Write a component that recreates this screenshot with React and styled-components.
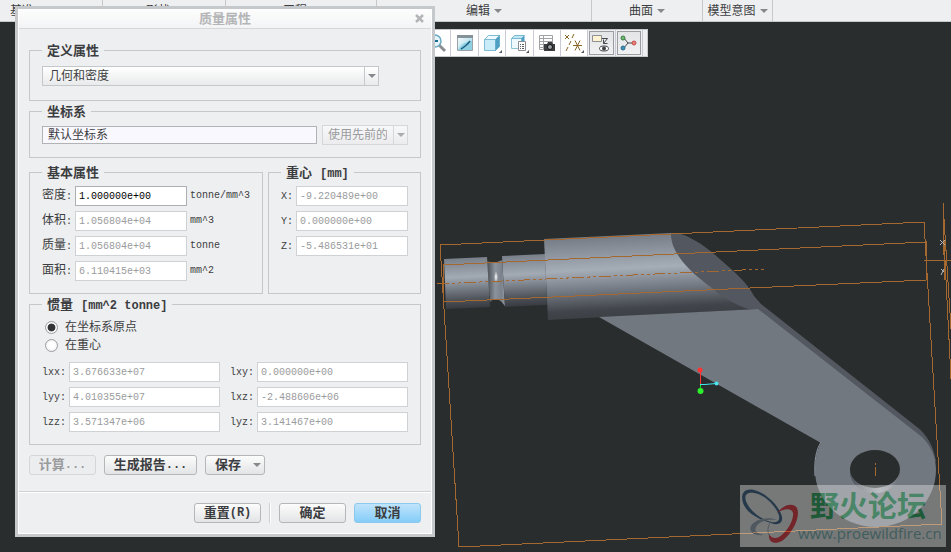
import React, { useState } from "react";
import styled, { createGlobalStyle, ThemeProvider } from "styled-components";

const theme = {
  fonts: {
    ui: '"Liberation Sans", "Noto Sans CJK SC", sans-serif',
    mono: '"Liberation Mono", "Noto Sans CJK SC", monospace',
  },
  colors: {
    panel: "#eeeff1",
    frame: "#c6c9cc",
    border: "#c5c8cb",
    text: "#3c3d40",
    muted: "#9a9b9d",
    canvas: "#292d2e",
    datum: "#a5692f",
  },
};

const GlobalStyle = createGlobalStyle`
  * {
    box-sizing: border-box;
  }
  body {
    margin: 0;
    background: #292d2e;
  }
`;

const Page = styled.div`
  position: relative;
  display: flex;
  flex-direction: column;
  min-height: 100vh;
  overflow: hidden;
  font: 12px/18px ${p => p.theme.fonts.ui};
  color: ${p => p.theme.colors.text};
`;

const Ribbon = styled.nav`
  display: flex;
  height: 22px;
  background: ${p => p.theme.colors.panel};
  border-bottom: 1px solid ${p => p.theme.colors.frame};
`;

const RibbonGroup = styled.button`
  display: flex;
  flex: 0 0 ${p => p.$width}px;
  align-items: center;
  justify-content: ${p => (p.$start ? "flex-start" : "center")};
  gap: 4px;
  padding: 0 0 0 ${p => (p.$start ? "10px" : "0")};
  border: 0;
  border-right: 1px solid ${p => p.theme.colors.frame};
  background: none;
  color: inherit;
  font: inherit;
  white-space: nowrap;
`;

const Caret = styled.span`
  flex: none;
  border: solid transparent;
  border-width: 4px 4px 0;
  border-top-color: ${p => (p.$muted ? "#a9abad" : "#86888b")};
`;

const Viewport = styled.main`
  position: relative;
  flex: 1;
  background: ${p => p.theme.colors.canvas};
`;

const Scene = styled.svg`
  position: absolute;
  inset: 0;
  width: 100%;
  height: 100%;
`;

const Toolbar = styled.div`
  position: relative;
  display: flex;
  width: 225px;
  height: 28px;
  margin: 7px 0 0 423px;
  padding-right: 4px;
  border: 1px solid ${p => p.theme.colors.frame};
  background: ${p => p.theme.colors.panel};
`;

const ToolButton = styled.button`
  display: flex;
  flex: 1;
  align-items: center;
  justify-content: center;
  padding: 0;
  border: 0;
  border-right: 1px solid #c9cad3;
  background: ${p => (p.$active ? "linear-gradient(#e3e4e6, #f1f2f3)" : "#fff")};
  box-shadow: ${p =>
    p.$active ? "inset 0 0 0 1px #eeeff1, inset 0 0 0 2px #9b9da0" : "none"};
`;

const Dialog = styled.section`
  position: absolute;
  top: 6px;
  left: 15px;
  width: 420px;
  border: 3px solid ${p => p.theme.colors.frame};
  background: ${p => p.theme.colors.panel};
  box-shadow: inset 0 0 0 1px #fff;
`;

const TitleBar = styled.header`
  display: grid;
  grid-template-columns: 24px 1fr 24px;
  align-items: center;
  height: 20px;
  margin: 0 1px;
  border-bottom: 1px solid #d5d7d9;
  background: linear-gradient(#fdfdfd, #f3f4f5);
`;

const DialogTitle = styled.h1`
  grid-column: 2;
  margin: 0;
  color: #b4b5b7;
  font-size: 13px;
  font-weight: bold;
  line-height: 18px;
  text-align: center;
`;

const CloseButton = styled.button`
  display: flex;
  justify-content: center;
  padding: 0;
  border: 0;
  background: none;
`;

const DialogBody = styled.div`
  display: flex;
  flex-direction: column;
  gap: 2px;
  padding: 13px 11px 16px;
`;

const Group = styled.fieldset`
  flex: ${p => (p.$grow ? "1" : "none")};
  min-width: 0;
  margin: 0;
  padding: ${p => (p.$roomy ? "7px 12px 15px" : "5px 12px 12px")};
  border: 1px solid ${p => p.theme.colors.border};
`;

const GroupTitle = styled.legend`
  height: 17px;
  padding: 0 5px;
  font-size: 13px;
  font-weight: bold;
  line-height: 17px;
`;

const Unit = styled.span`
  padding-left: ${p => (p.$spaced ? "8px" : "0")};
  font: bold 12px/12px ${p => p.theme.fonts.mono};
`;

const Columns = styled.div`
  display: flex;
  gap: 5px;
  margin-top: 4px;
`;

const Row = styled.div`
  display: flex;
  align-items: center;
  gap: 5px;
`;

const SelectBox = styled.div`
  display: grid;
  flex: none;
  width: ${p => p.$width}px;
  height: ${p => p.$height}px;
`;

const Select = styled.select`
  grid-area: 1 / 1;
  width: 100%;
  padding: 0 20px 0 6px;
  appearance: none;
  border: 1px solid ${p => p.theme.colors.border};
  border-radius: 0;
  background: linear-gradient(#fff, #e9eaeb);
  color: inherit;
  font: inherit;
  opacity: 1;
  &:disabled {
    padding-left: 5px;
    border-color: #d5d8da;
    background: linear-gradient(#f7f8f9, #ececee);
    color: ${p => p.theme.colors.muted};
  }
`;

const SelectArrow = styled.span`
  grid-area: 1 / 1;
  display: flex;
  align-items: center;
  justify-content: center;
  justify-self: end;
  width: 15px;
  border: 1px solid ${p => (p.$muted ? "#d5d8da" : p.theme.colors.border)};
  pointer-events: none;
`;

const TextBox = styled.input`
  flex: 1;
  min-width: 0;
  height: 18px;
  padding: 0 5px;
  border: 1px solid #b1b3b5;
  border-radius: 0;
  background: #f9f8ff;
  color: inherit;
  font: inherit;
`;

const FieldList = styled.div`
  display: grid;
  grid-template-columns: ${p => p.$columns};
  column-gap: ${p => p.$gap || 0}px;
  row-gap: 5px;
`;

const FieldRow = styled.div`
  display: flex;
  align-items: center;
  font-size: 12px;
`;

const FieldLabel = styled.label`
  flex: 0 0 ${p => p.$width}px;
  white-space: nowrap;
`;

const Latin = styled.span`
  font: 10px/18px ${p => p.theme.fonts.mono};
`;

const NumberBox = styled.input`
  flex: ${p => (p.$width ? `0 0 ${p.$width}px` : "1")};
  min-width: 0;
  height: 20px;
  padding: 0 3px;
  border: 1px solid ${p => (p.readOnly ? "#cfd2d5" : "#adafb1")};
  border-radius: 0;
  background: #fff;
  color: ${p => (p.readOnly ? p.theme.colors.muted : "#000")};
  font: 10px/18px ${p => p.theme.fonts.mono};
`;

const FieldUnit = styled(Latin)`
  padding-left: 3px;
  white-space: nowrap;
`;

const RadioLabel = styled.label`
  display: flex;
  align-items: center;
  gap: 7px;
  height: 18px;
  padding-left: 3px;
`;

const Radio = styled.input`
  width: 13px;
  height: 13px;
  margin: 0;
  appearance: none;
  border: 1px solid #9c9ea1;
  border-radius: 50%;
  background: radial-gradient(#fff 40%, #e3e4e6);
  &:checked {
    background: radial-gradient(#333437 45%, #f6f6f7 55%);
  }
`;

const Inertia = styled.div`
  margin-top: 8px;
`;

const Actions = styled.div`
  display: flex;
  gap: 8px;
  margin-top: 8px;
`;

const Footer = styled.footer`
  display: flex;
  justify-content: flex-end;
  gap: 8px;
  margin: 0 1px;
  padding: 11px 10px;
  border-top: 1px solid #d0d2d4;
  box-shadow: inset 0 1px 0 #fff;
`;

const Divider = styled.span`
  width: 2px;
  border-left: 1px solid #cdcfd1;
  background: #fff;
`;

const Button = styled.button`
  display: flex;
  align-items: center;
  justify-content: ${p => (p.$menu ? "space-between" : "center")};
  width: ${p => p.$width || 67}px;
  height: 20px;
  padding: ${p => (p.$menu ? "0 3px 0 9px" : "0")};
  border: 1px solid ${p => (p.$primary ? "#8cc9ee" : "#b4b6b8")};
  border-radius: 3px;
  background: ${p =>
    p.$primary
      ? "linear-gradient(#c0e4fb, #84cdf9)"
      : "linear-gradient(#fcfcfc, #e3e4e5)"};
  color: inherit;
  font: bold 13px/18px ${p => p.theme.fonts.ui};
  white-space: nowrap;
  &:disabled {
    border-color: #d4d6d8;
    background: #ecedef;
    color: ${p => p.theme.colors.muted};
  }
`;

const Watermark = styled.div`
  position: absolute;
  right: 5px;
  bottom: 5px;
  display: flex;
  width: 206px;
  height: 62px;
  background: #e2e2e2;
  opacity: 0.42;
`;

const WatermarkText = styled.div`
  display: flex;
  flex-direction: column;
  color: #5f9f9a;
  font: 15px/20px "Open Sans", sans-serif;
`;

const WatermarkName = styled.strong`
  padding-left: 12px;
  color: #119846;
  font: bold 29px/38px "Noto Sans CJK SC", sans-serif;
`;

const ribbonGroups = [
  { label: "基准", width: 103, start: true },
  { label: "形状", width: 123 },
  { label: "工程", width: 151 },
  { label: "编辑", width: 215 },
  { label: "曲面", width: 111 },
  { label: "模型意图", width: 70 },
];

const basics = [
  { id: "density", label: "密度", value: "1.000000e+00", unit: "tonne/mm^3", editable: true },
  { id: "volume", label: "体积", value: "1.056804e+04", unit: "mm^3" },
  { id: "mass", label: "质量", value: "1.056804e+04", unit: "tonne" },
  { id: "area", label: "面积", value: "6.110415e+03", unit: "mm^2" },
];

const centroid = [
  { id: "X", value: "-9.220489e+00" },
  { id: "Y", value: "0.000000e+00" },
  { id: "Z", value: "-5.486531e+01" },
];

const inertia = [
  { id: "lxx", value: "3.676633e+07" },
  { id: "lxy", value: "0.000000e+00" },
  { id: "lyy", value: "4.010355e+07" },
  { id: "lxz", value: "-2.488606e+06" },
  { id: "lzz", value: "3.571347e+06" },
  { id: "lyz", value: "3.141467e+00" },
];

const Corner = () => <path d="M20 17v3h-3z" fill="#55585b" />;

const toolIcons = {
  zoomOut: (
    <>
      <path d="M12 12l6 6" stroke="#8b8f94" strokeWidth="3" />
      <circle cx="8" cy="8" r="6" fill="#e4f5fb" stroke="#6aa9bf" strokeWidth="1.5" />
      <path d="M5 8h6" stroke="#1b6d92" strokeWidth="2" />
    </>
  ),
  repaint: (
    <>
      <path d="M2.500 2.500h15v15h-15z" fill="url(#sheet)" stroke="#9aa3a9" />
      <path d="M2 2h16v3H2z" fill="#85929a" />
      <path d="M3 17c3-6 7-8 14-9v9z" fill="#8fd0e2" />
      <path d="M6 16c2-1 7-5 9-8" stroke="#1c5f80" strokeWidth="1.500" fill="none" />
    </>
  ),
  shading: (
    <>
      <path d="M2.500 6.500h11v11h-11z" fill="#c9ecf8" stroke="#7dbad3" />
      <path d="M2.500 6.500l4-4h11l-4 4z" fill="#eefafd" stroke="#7dbad3" />
      <path d="M13.500 6.500l4-4v11l-4 4z" fill="#4d9fc3" stroke="#68aecb" />
      <Corner />
    </>
  ),
  views: (
    <>
      <path d="M2.500 5.500h10v10h-10z" fill="#eef9fd" stroke="#8dc3d9" />
      <path d="M2.500 5.500l3-3h10l-3 3z" fill="#bfe7f6" stroke="#7ab8d2" />
      <path d="M12.500 5.500l3-3v7h-3z" fill="#4d9fc3" />
      <path d="M9.500 8.500h7v9h-7z" fill="#fff" stroke="#8a8c8f" />
      <path d="M11 11.500h1m1 0h2m-4 2h1m1 0h2m-4 2h1m1 0h2" stroke="#5b5e61" />
      <Corner />
    </>
  ),
  snapshot: (
    <>
      <path d="M2.500 2.500h13v14h-13zM2.500 5.500h13m-13 3h13m-13 3h13m-13 3h13m-9-12v14" fill="#fff" stroke="#a0a3a6" />
      <path d="M7 11h3l1-2h4l1 2h2v7H7z" fill="#3a3d40" />
      <circle cx="13" cy="14" r="2.500" fill="#9da1a5" stroke="#111" />
    </>
  ),
  datums: (
    <>
      <path d="M1 2l4 4m0-4L1 6M10 1l-2 4M7 8l-2 4M4 14l-2 4M9 12.500h9m-7-5l5 10m0-10l-5 10" stroke="#8a6628" fill="none" />
      <Corner />
    </>
  ),
  annotations: (
    <>
      <path d="M1.500 2.500h9v6h-9z" fill="#fff3d4" stroke="#8d8f92" />
      <path d="M11 5.500h5.500l-4 5m0-4v4h4" stroke="#46494c" fill="none" />
      <ellipse cx="13" cy="15.500" rx="4.500" ry="2.500" fill="#fff" stroke="#3f4144" />
      <circle cx="13" cy="15.500" r="2" fill="#3f4144" />
    </>
  ),
  spin: (
    <>
      <path d="M4 4l5 6h7M9 10l-5 6" stroke="#44474a" fill="none" />
      <circle cx="4" cy="5" r="2" fill="#6fbb6f" stroke="#3c7c42" />
      <circle cx="15" cy="10" r="2" fill="#e87f7a" stroke="#c5504b" />
      <circle cx="4" cy="15" r="2" fill="#3f8fb4" stroke="#2b6d8f" />
    </>
  ),
};

const tools = [
  { id: "zoomOut", title: "缩小" },
  { id: "repaint", title: "重画" },
  { id: "shading", title: "显示样式" },
  { id: "views", title: "已命名视图" },
  { id: "snapshot", title: "视图管理器" },
  { id: "datums", title: "基准显示" },
  { id: "annotations", title: "注释显示", active: true },
  { id: "spin", title: "旋转中心", active: true },
];

const Model = () => (
  <Scene viewBox="0 22 951 530" preserveAspectRatio="xMinYMin meet" aria-hidden="true">
    <defs>
      <linearGradient id="shaft" x1="0" y1="0" x2="0.040" y2="1">
        <stop offset="0" stopColor="#747b84" />
        <stop offset="0.400" stopColor="#a2aab4" />
        <stop offset="0.500" stopColor="#8f969f" />
        <stop offset="0.850" stopColor="#4c5057" />
        <stop offset="1" stopColor="#383b40" />
      </linearGradient>
      <linearGradient id="barrel" gradientUnits="userSpaceOnUse" x1="620" y1="236" x2="624" y2="317">
        <stop offset="0" stopColor="#767d86" />
        <stop offset="0.400" stopColor="#a5adb7" />
        <stop offset="0.650" stopColor="#747a83" />
        <stop offset="0.900" stopColor="#41444a" />
        <stop offset="1" stopColor="#3c3f44" />
      </linearGradient>
      <linearGradient id="neck" x1="0" x2="1">
        <stop offset="0" stopColor="#4a4e54" />
        <stop offset="0.450" stopColor="#8b929b" />
        <stop offset="0.800" stopColor="#7b828b" />
        <stop offset="1" stopColor="#9299a2" />
      </linearGradient>
      <radialGradient id="glint">
        <stop offset="0" stopColor="#fff" />
        <stop offset="1" stopColor="#fff" stopOpacity="0" />
      </radialGradient>
      <linearGradient id="bore" x1="0" x2="1">
        <stop offset="0" stopColor="#4b4f56" />
        <stop offset="0.600" stopColor="#9fa6af" />
        <stop offset="1" stopColor="#6b7078" />
      </linearGradient>
    </defs>

    {/* shaft */}
    <path d="M487 261c4 2 10 2 15-1l3 46c-4-5-6-7-9-7s-4 1-6 3z" fill="url(#neck)" />
    <ellipse cx="496" cy="277" rx="2" ry="6" fill="url(#glint)" />
    <path d="M444 259l43-2 3 50-44 2z" fill="url(#shaft)" />
    <path d="M502 256l43-2 2 51-42 2z" fill="url(#shaft)" />
    <path d="M544 239l127-6h8l79 76-210 11z" fill="url(#barrel)" />

    {/* cut face and arm */}
    <path
      d="M671 233h6c14 3 30 14 45 28 14 12 26 23 32 35l7 8 156 123c10 8 16 18 19 34l-6 4L758 310l-10-1c-14-5-26-12-36-21-14-10-26-21-32-30-7-10-9-17-9-25z"
      fill="#53575f"
    />
    <path
      fillRule="evenodd"
      d="M599 317l159-8 164 128c10 10 14 21 14 33 0 32-27 57-60 57s-61-25-61-57c0-11 2-20 6-27z"
      fill="#727880"
    />
    <ellipse cx="875" cy="472" rx="25" ry="21" fill="url(#bore)" />
    <ellipse cx="875" cy="469" rx="25" ry="19" fill={theme.colors.canvas} />
    <path d="M821 442c-5 8-7 19-6 34" stroke="#8d959e" fill="none" />

    {/* datum planes and axes */}
    <g fill="none" stroke={theme.colors.datum} shapeRendering="crispEdges">
      <path d="M440 245l484-23 18 302-483 23z" />
      <path d="M443 265l483-23v38l-483 22z" />
      <path d="M437 284l327-15" strokeDasharray="12 3 3 3 3 3" />
      <path d="M924 261l27-1M943 203v52M943 203l2 77M943 203l8 126M944 240l7 139" />
      <path d="M875.500 463v2m0 2v9" />
    </g>
    <path d="M940 240l5 5m0-5l-5 5M941 269l3 3m0-3l-3 6" stroke="#b5b7b8" fill="none" />

    {/* coordinate system */}
    <path d="M700.500 384v6" stroke="#22d422" />
    <path d="M700.500 384v-14" stroke="#f33" />
    <path d="M700 384.500h5l11-1" stroke="#3fe6f0" fill="none" />
    <circle cx="700" cy="370" r="2.500" fill="#f33" />
    <circle cx="716.500" cy="383.500" r="2" fill="#4ee4ee" />
    <circle cx="700.500" cy="391" r="3" fill="#2cf02c" />
  </Scene>
);

const WatermarkLogo = () => (
  <svg width="58" height="62" viewBox="0 0 58 62" aria-hidden="true">
    {/* upper loop, right loop, small loop */}
    <path d="M3 18C0 8 5 3 14 5c13 3 26 17 28 27 1 6-4 9-11 6C17 34 6 27 3 18zM6 16c3 9 14 18 25 21 6 1 9-1 8-6C37 22 24 9 14 8 7 7 4 10 6 16z" fillRule="evenodd" fill="#224b73" />
    <path d="M37 28c6-8 16-11 20-5 4 9-5 26-15 33-8 4-14 1-13-7 2 4 6 5 10 3 8-5 15-17 14-24-1-5-9-5-16 0z" fill="#d91c24" />
    <path d="M37 35c-8-4-22-1-26 6-3 6 4 10 13 9-7-1-10-4-8-8 3-6 12-8 21-7z" fill="#8594a4" />
    <path d="M31 36c-3 5-4 10-2 14" stroke="#8594a4" fill="none" />
  </svg>
);

const DropDown = ({ label, width, height, disabled, children }) => (
  <SelectBox $width={width} $height={height}>
    <Select aria-label={label} disabled={disabled}>
      {children}
    </Select>
    <SelectArrow $muted={disabled}>
      <Caret $muted={disabled} />
    </SelectArrow>
  </SelectBox>
);

const MassProperties = () => {
  const [density, setDensity] = useState(basics[0].value);
  const [origin, setOrigin] = useState("csys");

  return (
    <Dialog role="dialog" aria-labelledby="dialog-title">
      <TitleBar>
        <DialogTitle id="dialog-title">质量属性</DialogTitle>
        <CloseButton aria-label="关闭">
          <svg width="9" height="9" viewBox="0 0 9 9">
            <path d="M1 1l7 7m0-7L1 8" stroke="#b4b5b7" strokeWidth="2.500" />
          </svg>
        </CloseButton>
      </TitleBar>

      <DialogBody>
        <Group $roomy>
          <GroupTitle>定义属性</GroupTitle>
          <DropDown label="定义属性" width={337} height={19}>
            <option>几何和密度</option>
          </DropDown>
        </Group>

        <Group>
          <GroupTitle>坐标系</GroupTitle>
          <Row>
            <TextBox aria-label="坐标系" defaultValue="默认坐标系" />
            <DropDown label="使用先前的" width={86} height={20} disabled>
              <option>使用先前的</option>
            </DropDown>
          </Row>
        </Group>

        <Columns>
          <Group $grow>
            <GroupTitle>基本属性</GroupTitle>
            <FieldList $columns="1fr">
              {basics.map(f => (
                <FieldRow key={f.id}>
                  <FieldLabel $width={33} htmlFor={f.id}>
                    {f.label}
                    <Latin>:</Latin>
                  </FieldLabel>
                  <NumberBox
                    id={f.id}
                    $width={112}
                    readOnly={!f.editable}
                    value={f.editable ? density : f.value}
                    onChange={e => setDensity(e.target.value)}
                  />
                  <FieldUnit>{f.unit}</FieldUnit>
                </FieldRow>
              ))}
            </FieldList>
          </Group>

          <Group>
            <GroupTitle>
              重心<Unit $spaced>[mm]</Unit>
            </GroupTitle>
            <FieldList $columns="127px">
              {centroid.map(f => (
                <FieldRow key={f.id}>
                  <FieldLabel $width={15} htmlFor={f.id}>
                    <Latin>{f.id}:</Latin>
                  </FieldLabel>
                  <NumberBox id={f.id} readOnly value={f.value} />
                </FieldRow>
              ))}
            </FieldList>
          </Group>
        </Columns>

        <Group>
          <GroupTitle>
            惯量<Unit $spaced>[mm^2 tonne]</Unit>
          </GroupTitle>
          <RadioLabel>
            <Radio type="radio" name="origin" checked={origin === "csys"} onChange={() => setOrigin("csys")} />
            在坐标系原点
          </RadioLabel>
          <RadioLabel>
            <Radio type="radio" name="origin" checked={origin === "cog"} onChange={() => setOrigin("cog")} />
            在重心
          </RadioLabel>
          <Inertia>
            <FieldList $columns="1fr 1fr" $gap={10}>
              {inertia.map(f => (
                <FieldRow key={f.id}>
                  <FieldLabel $width={27} htmlFor={f.id}>
                    <Latin>{f.id}:</Latin>
                  </FieldLabel>
                  <NumberBox id={f.id} readOnly value={f.value} />
                </FieldRow>
              ))}
            </FieldList>
          </Inertia>
        </Group>

        <Actions>
          <Button disabled>
            计算<Unit>...</Unit>
          </Button>
          <Button $width={93}>
            生成报告<Unit>...</Unit>
          </Button>
          <Button $width={60} $menu>
            保存
            <Caret />
          </Button>
        </Actions>
      </DialogBody>

      <Footer>
        <Button>
          重置<Unit>(R)</Unit>
        </Button>
        <Divider />
        <Button>确定</Button>
        <Button $primary>取消</Button>
      </Footer>
    </Dialog>
  );
};

const App = () => (
  <ThemeProvider theme={theme}>
    <GlobalStyle />
    <Page>
      <Ribbon>
        {ribbonGroups.map(g => (
          <RibbonGroup key={g.label} $width={g.width} $start={g.start}>
            {g.label}
            <Caret />
          </RibbonGroup>
        ))}
      </Ribbon>
      <Viewport>
        <Model />
        <Toolbar role="toolbar">
          {tools.map(t => (
            <ToolButton key={t.id} aria-label={t.title} $active={t.active}>
              <svg width="20" height="20" viewBox="0 0 20 20">
                <defs>
                  <linearGradient id="sheet" x1="0" y1="0" x2="1" y2="1">
                    <stop offset="0" stopColor="#fff" />
                    <stop offset="1" stopColor="#8fd0e2" />
                  </linearGradient>
                </defs>
                {toolIcons[t.id]}
              </svg>
            </ToolButton>
          ))}
        </Toolbar>
        <Watermark>
          <WatermarkLogo />
          <WatermarkText>
            <WatermarkName>野火论坛</WatermarkName>
            www.proewildfire.cn
          </WatermarkText>
        </Watermark>
      </Viewport>
      <MassProperties />
    </Page>
  </ThemeProvider>
);

export default App;
